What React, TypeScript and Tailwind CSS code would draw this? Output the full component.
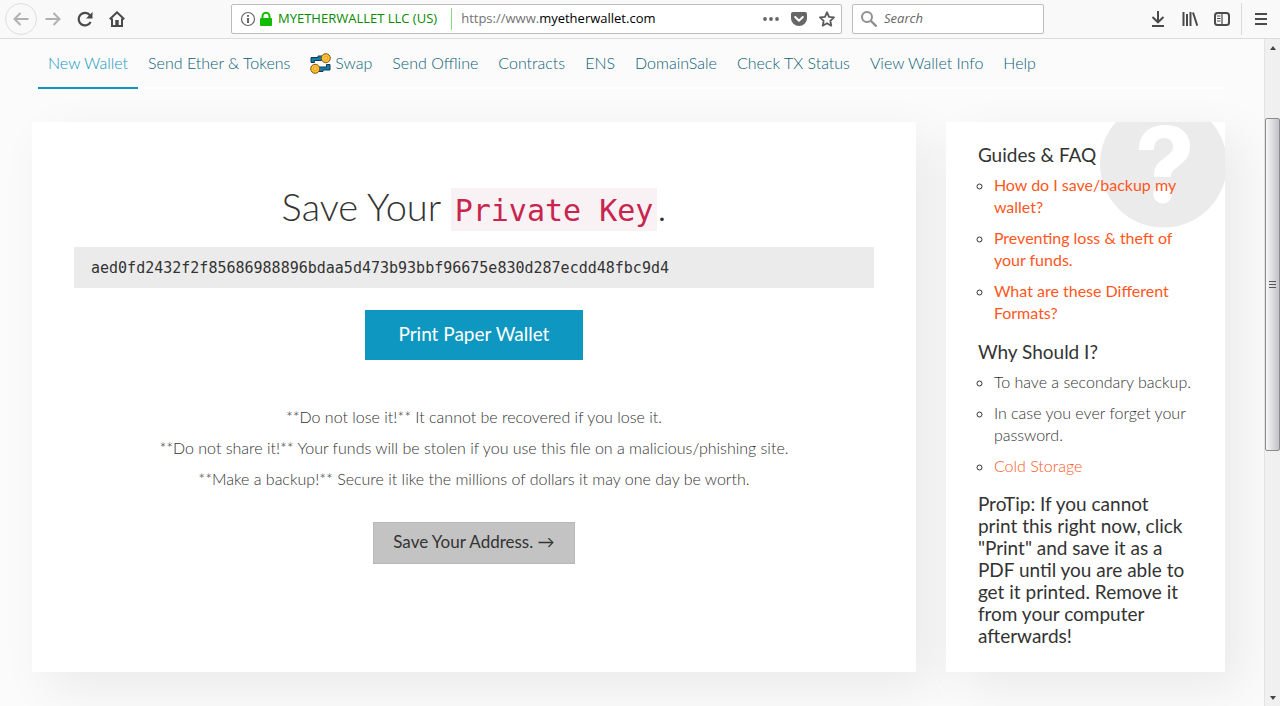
import type { ReactNode } from 'react'

const tabs = [
  'New Wallet',
  'Send Ether & Tokens',
  'Swap',
  'Send Offline',
  'Contracts',
  'ENS',
  'DomainSale',
  'Check TX Status',
  'View Wallet Info',
  'Help',
]

const guides = [
  'How do I save/backup my wallet?',
  'Preventing loss & theft of your funds.',
  'What are these Different Formats?',
]

const warnings = [
  '**Do not lose it!** It cannot be recovered if you lose it.',
  '**Do not share it!** Your funds will be stolen if you use this file on a malicious/phishing site.',
  '**Make a backup!** Secure it like the millions of dollars it may one day be worth.',
]

function ToolButton({ label, className = '', children }: { label: string; className?: string; children: ReactNode }) {
  return (
    <button aria-label={label} className={`flex size-8 shrink-0 items-center justify-center ${className}`}>
      <svg viewBox="0 0 16 16" className="size-4" fill="none" stroke="currentColor" strokeWidth="2">
        {children}
      </svg>
    </button>
  )
}

function Toolbar() {
  return (
    <header className="flex items-center border-b border-[#dcdcdc] bg-[#f9f9f9] py-[3px] pr-[3px] pl-[5px] font-['Open_Sans','Noto_Sans',sans-serif] text-[13px] text-[#4a4a4a]">
      <ToolButton label="Back" className="rounded-full border border-[#dedede] text-[#b1b1b1]">
        <path d="M15.5 8H1.5M7.5 2 1.5 8l6 6" />
      </ToolButton>
      <ToolButton label="Forward" className="text-[#b1b1b1]">
        <path d="M.5 8h14M8.500 2l6 6-6 6" />
      </ToolButton>
      <ToolButton label="Reload">
        <path d="M13.600 11A6.300 6.300 0 1 1 13 4.300" strokeWidth="2.200" />
        <path d="M15.500 1v6.500H9z" fill="currentColor" stroke="none" />
      </ToolButton>
      <ToolButton label="Home">
        <path d="M.8 8.300 8 1.300l7.200 7M3 7.500V15h10V7.500" />
        <path d="M6.300 9h3.400v5.500H6.300z" fill="currentColor" stroke="none" />
      </ToolButton>
      <div className="w-[98px] shrink-0" />
      <div className="flex h-[30px] min-w-0 flex-1 items-center rounded-xs border border-[#bdbdbd] bg-white pl-2">
        <svg viewBox="0 0 16 16" className="size-4 shrink-0 text-[#666]" fill="none" stroke="currentColor">
          <circle cx="8" cy="8" r="6.500" strokeWidth="1.200" />
          <path d="M8 7v5M8 4v1.800" strokeWidth="2" />
        </svg>
        <svg viewBox="0 0 16 16" className="ml-[2px] size-4 shrink-0">
          <path d="M4.500 8V5.200a3.500 3.500 0 0 1 7 0V8" fill="none" stroke="#12bc00" strokeWidth="2" />
          <rect x="2" y="7" width="12" height="8" rx="1" fill="#12bc00" />
        </svg>
        <span className="ml-1 shrink-0 whitespace-nowrap text-[#058b00]">MYETHERWALLET LLC (US)</span>
        <span className="mr-[9px] ml-[14px] h-[22px] w-px shrink-0 bg-[#88d97f]" />
        <label htmlFor="url" className="text-[#737373]">
          https://www.
        </label>
        <input id="url" className="min-w-0 flex-1 text-black outline-none" defaultValue="myetherwallet.com" />
        <button aria-label="Page actions" className="mr-1 p-1 text-[#666]">
          <svg viewBox="0 0 16 16" className="size-4" fill="currentColor">
            <circle cx="2" cy="8" r="1.900" />
            <circle cx="8" cy="8" r="1.900" />
            <circle cx="14" cy="8" r="1.900" />
          </svg>
        </button>
        <button aria-label="Save to Pocket" className="mr-1 p-1 text-[#666]">
          <svg viewBox="0 0 16 16" className="size-4">
            <path d="M2 1h12a2 2 0 0 1 2 2v4.500a8 7.500 0 0 1-16 0V3a2 2 0 0 1 2-2z" fill="currentColor" />
            <path d="M4.200 6 8 9.700 11.800 6" fill="none" stroke="#fff" strokeWidth="2" strokeLinecap="round" strokeLinejoin="round" />
          </svg>
        </button>
        <button aria-label="Bookmark this page" className="mr-[2px] p-1 text-[#5a5a5a]">
          <svg viewBox="0 0 16 16" className="size-4">
            <path
              d="m8 1.300 2 4.600 5 .5-3.700 3.400 1 4.900L8 12.200l-4.300 2.500 1-4.900L1 6.400l5-.5z"
              fill="none"
              stroke="currentColor"
              strokeWidth="1.800"
              strokeLinejoin="round"
            />
          </svg>
        </button>
      </div>
      <div className="ml-[10px] flex h-[30px] w-48 shrink-0 items-center rounded-xs border border-[#bdbdbd] bg-white pl-2">
        <svg viewBox="0 0 16 16" className="size-4 shrink-0 text-[#8f8f8f]" fill="none" stroke="currentColor" strokeWidth="2">
          <circle cx="6" cy="6" r="5" />
          <path d="m9.500 9.500 6 6" strokeWidth="2.400" />
        </svg>
        <input aria-label="Search" placeholder="Search" className="ml-[7px] min-w-0 flex-1 italic outline-none placeholder:text-[#666]" />
      </div>
      <div className="w-[98px] shrink-0" />
      <ToolButton label="Downloads">
        <path d="M8 0v11M2.500 6 8 11.300 13.500 6M2 15h12" />
      </ToolButton>
      <ToolButton label="Library">
        <path d="M1.500 1v14M5 3v12M8.500 1v14" />
        <path d="m11 1.500 4.300 13.300" />
      </ToolButton>
      <ToolButton label="Sidebars">
        <rect x="1" y="2" width="14" height="12" rx="2.500" />
        <path d="M8 2v12" strokeWidth="1.200" />
        <path d="M3 5h3.500M3 7.500h3.500M3 10h3.500" strokeWidth="1" />
      </ToolButton>
      <span className="mx-[3px] h-8 w-px bg-[#d9d9d9]" />
      <ToolButton label="Open menu">
        <path d="M2 3h12M2 8h12M2 13h12" />
      </ToolButton>
    </header>
  )
}

function SwapIcon() {
  return (
    <svg viewBox="0 0 21 21" className="mr-1 size-[21px]">
      <path d="M1 9.500V4.500h7V3h4v4.500H4.500v2z" fill="#0e7fa8" stroke="#163850" />
      <path d="M20 11.500v5.500h-7v1.500H9V14h7.500v-2.500z" fill="#0e7fa8" stroke="#163850" />
      <circle cx="15.800" cy="5.200" r="4.500" fill="#ffc233" stroke="#7b511c" />
      <circle cx="5.200" cy="15.800" r="4.500" fill="#ffc233" stroke="#7b511c" />
      <circle cx="15.800" cy="5.200" r="2" fill="#ffcf4a" stroke="#f59b22" />
      <circle cx="5.200" cy="15.800" r="2" fill="#ffcf4a" stroke="#f59b22" />
    </svg>
  )
}

function Nav() {
  return (
    <nav className="mr-[39px] ml-[38px] flex border-b-2 border-white">
      {tabs.map((tab, i) => (
        <a
          key={tab}
          href="#"
          className={`-mb-[2px] flex h-[50px] items-center border-b-2 px-[10px] font-light whitespace-nowrap ${
            i === 0 ? 'border-[#0e97c0] text-[#0e97c0]' : 'border-transparent text-[#0b5f79]'
          }`}
        >
          {tab === 'Swap' && <SwapIcon />}
          {tab}
        </a>
      ))}
    </nav>
  )
}

function PrivateKey() {
  return (
    <section className="bg-white px-[42px] pt-[62px] pb-[108px] text-center shadow-[16px_16px_47px_0_rgba(0,0,0,0.07)]">
      <h1 className="text-[38px] leading-[45px] font-light">
        Save Your{' '}
        <code className="bg-[#f9f2f4] px-1 pt-[5px] pb-[3px] font-['DejaVu_Sans_Mono','Liberation_Mono',monospace] text-[30px] font-normal text-[#c7254e]">
          Private Key
        </code>
        .
      </h1>
      <input
        readOnly
        aria-label="Private key"
        className="mt-[14px] block h-[41px] w-full bg-[#ebebeb] px-[17px] font-['DejaVu_Sans_Mono','Liberation_Mono',monospace] text-[15px] outline-none"
        defaultValue="aed0fd2432f2f85686988896bdaa5d473b93bbf96675e830d287ecdd48fbc9d4"
      />
      <button className="mt-[22px] h-[50px] w-[218px] bg-[#0e97c0] pb-[2px] text-[19px] text-white">Print Paper Wallet</button>
      <div className="mt-[46px] space-y-[9px] leading-[22px] font-light">
        {warnings.map((w) => (
          <p key={w}>{w}</p>
        ))}
      </div>
      <button className="mt-8 h-[42px] w-[202px] border border-[#b8b8b8] bg-[#c3c3c3] pb-[2px] text-[17px]">
        Save Your Address. →
      </button>
    </section>
  )
}

function Help() {
  return (
    <aside className="relative overflow-hidden bg-white px-8 pt-[22px] pb-6 leading-[22px]">
      <svg viewBox="0 0 128 128" className="absolute -top-[22px] -right-[2px] size-32">
        <circle cx="64.500" cy="64" r="63.500" fill="#ebebeb" />
        <path
          d="M40 50C40 34 50 25 66 25c15 0 25 8 25 21 0 10-5 15-11 20-6 4-8 6-8 11H55c0-9 2-13 9-18 6-5 10-7 10-12 0-6-4-9-9-9-6 0-10 4-10 12z"
          fill="#fff"
        />
        <circle cx="63.700" cy="94" r="9.500" fill="#fff" />
      </svg>
      <div className="relative">
        <h2 className="text-[19px] leading-[22px]">Guides &amp; FAQ</h2>
        <ul className="mt-2 list-[circle] space-y-[9px] pl-4">
          {guides.map((g) => (
            <li key={g}>
              <a href="#" className="text-[#ff5722]">
                {g}
              </a>
            </li>
          ))}
        </ul>
        <h2 className="mt-[17px] text-[19px] leading-[22px]">Why Should I?</h2>
        <ul className="mt-2 list-[circle] space-y-[9px] pl-4 font-light">
          <li>To have a secondary backup.</li>
          <li>In case you ever forget your password.</li>
          <li>
            <a href="#" className="text-[#ff5722]">
              Cold Storage
            </a>
          </li>
        </ul>
        <h2 className="mt-4 pr-1 text-[19px] leading-[22px]">
          ProTip: If you cannot print this right now, click "Print" and save it as a PDF until you are able to get it
          printed. Remove it from your computer afterwards!
        </h2>
      </div>
    </aside>
  )
}

function Scrollbar() {
  return (
    <div className="flex w-4 shrink-0 flex-col items-center border-l border-[#e3e3e3] bg-[#f0f0f0]">
      <svg viewBox="0 0 16 16" className="size-4">
        <path d="M5 11 8 7l3 4z" fill="#444" />
      </svg>
      <div className="h-[63px]" />
      <div className="flex h-[333px] w-full items-center justify-center rounded-xs border border-[#8c8c8c] bg-linear-to-r from-[#f7f7f7] to-[#c2c2c8]">
        <svg viewBox="0 0 8 8" className="size-2" stroke="#555">
          <path d="M0 .5h7M0 3.500h7M0 6.500h7" />
        </svg>
      </div>
      <div className="flex-1" />
      <svg viewBox="0 0 16 16" className="size-4">
        <path d="m5 6 3 4 3-4z" fill="#444" />
      </svg>
    </div>
  )
}

export default function App() {
  return (
    <div className="flex min-h-screen flex-col bg-[#fbfbfb] font-['Lato',sans-serif] text-base text-[#333]">
      <Toolbar />
      <div className="flex flex-1">
        <div className="min-w-0 flex-1 overflow-hidden">
          <Nav />
          <main className="mt-[33px] mr-[39px] mb-[34px] ml-8 grid grid-cols-[19fr_6fr] gap-[30px]">
            <PrivateKey />
            <div className="grid shadow-[16px_16px_47px_0_rgba(0,0,0,0.07)]">
              <Help />
            </div>
          </main>
        </div>
        <Scrollbar />
      </div>
    </div>
  )
}
